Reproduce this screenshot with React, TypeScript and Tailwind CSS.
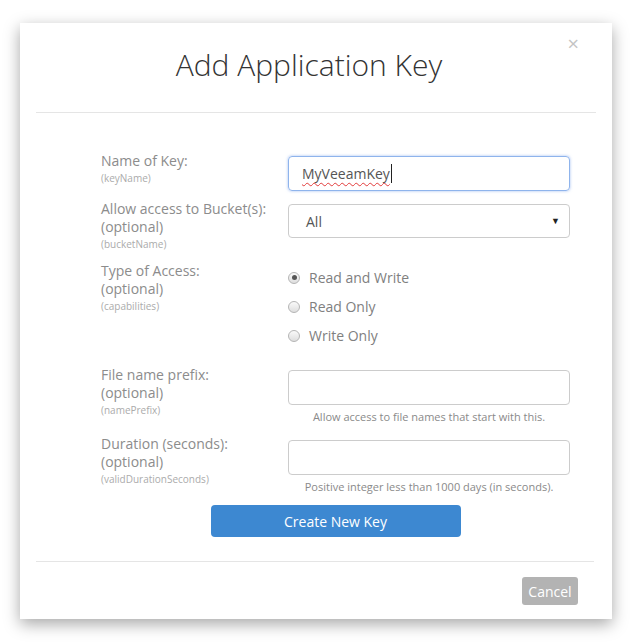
import React from 'react';

const FONT = { fontFamily: '"Open Sans", "Liberation Sans", sans-serif' };

const Label: React.FC<{ title: string; optional?: boolean; field: string }> = ({ title, optional, field }) => (
  <div className="w-[187px] shrink-0 pr-2">
    <div className="text-[14px] leading-[18px] text-[#8c8c8c]">{title}</div>
    {optional && <div className="text-[14px] leading-[18px] text-[#8c8c8c]">(optional)</div>}
    <div className="text-[10px] leading-[14px] text-[#ababab] mt-[1px]">({field})</div>
  </div>
);

const Radio: React.FC<{ label: string; checked?: boolean }> = ({ label, checked }) => (
  <div className="flex items-center h-[29px]">
    <span className="w-[12px] h-[12px] rounded-full border border-[#b5b5b5] bg-gradient-to-b from-[#fafafa] to-[#dedede] flex items-center justify-center">
      {checked && <span className="w-[5px] h-[5px] rounded-full bg-[#555]" />}
    </span>
    <span className="ml-[9px] text-[14px] text-[#808080]">{label}</span>
  </div>
);

const Field: React.FC<{ children?: React.ReactNode; focused?: boolean }> = ({ children, focused }) => (
  <div
    className={`h-[35px] w-[282px] rounded-[4px] border flex items-center px-[13px] text-[14px] text-[#555] ${
      focused ? 'border-[#8fb4ec] shadow-[0_0_3px_rgba(102,150,233,0.6)]' : 'border-[#cccccc]'
    }`}
  >
    {children}
  </div>
);

export default function App() {
  return (
    <div className="w-[632px] h-[642px] bg-white pt-[23px] pl-[20px]" style={FONT}>
      <div className="w-[592px] h-[596px] bg-white shadow-[0_5px_15px_rgba(0,0,0,0.35)] flex flex-col">
        {/* header */}
        <div className="relative px-4 pt-[24px]">
          <span className="absolute right-[33px] top-[9px] text-[20px] leading-[24px] text-[#c4c4c4]">×</span>
          <h2 className="text-center pr-[14px] text-[30px] leading-[36px] font-light text-[#333]">Add Application Key</h2>
          <div className="mt-[29px] h-px bg-[#e5e5e5]" />
        </div>

        {/* body */}
        <div className="pl-[81px] w-[550px]">
          <div className="mt-[39px] flex">
            <Label title="Name of Key:" field="keyName" />
            <div className="mt-[4px]">
              <Field focused>
                <span className="underline decoration-wavy decoration-[#e23b3b] decoration-1 underline-offset-[3px]">MyVeeamKey</span>
                <span className="w-px h-[19px] bg-[#222] ml-[1px]" />
              </Field>
            </div>
          </div>

          <div className="mt-[9px] flex">
            <Label title="Allow access to Bucket(s):" optional field="bucketName" />
            <div className="mt-[4px]">
              <div className="h-[34px] w-[282px] rounded-[4px] border border-[#cccccc] flex items-center justify-between pl-[17px] pr-[9px] text-[14px] text-[#555]">
                <span>All</span>
                <span className="text-[9px] text-[#222]">▼</span>
              </div>
            </div>
          </div>

          <div className="mt-[11px] flex">
            <Label title="Type of Access:" optional field="capabilities" />
            <div className="mt-[1px]">
              <Radio label="Read and Write" checked />
              <Radio label="Read Only" />
              <Radio label="Write Only" />
            </div>
          </div>

          <div className="mt-[16px] flex">
            <Label title="File name prefix:" optional field="namePrefix" />
            <div className="mt-[4px]">
              <Field />
              <div className="text-center text-[11px] leading-[15px] mt-[4px] text-[#8a8a8a]">
                Allow access to file names that start with this.
              </div>
            </div>
          </div>

          <div className="mt-[11px] flex">
            <Label title="Duration (seconds):" optional field="validDurationSeconds" />
            <div className="mt-[5px]">
              <Field />
              <div className="text-center text-[11px] leading-[15px] mt-[4px] text-[#8a8a8a]">
                Positive integer less than 1000 days (in seconds).
              </div>
            </div>
          </div>

          <div className="w-[469px] mt-[11px] flex justify-center">
            <button className="w-[250px] h-[32px] rounded-[4px] bg-[#3d88d1] text-white text-[14px]">Create New Key</button>
          </div>
        </div>

        {/* footer */}
        <div className="mt-[24px] mx-4 mr-[18px] h-px bg-[#e5e5e5]" />
        <div className="flex justify-end pr-[34px] pt-[15px]">
          <button className="h-[28px] w-[56px] rounded-[3px] bg-[#b3b3b3] text-white text-[14px]">Cancel</button>
        </div>
      </div>
    </div>
  );
}
